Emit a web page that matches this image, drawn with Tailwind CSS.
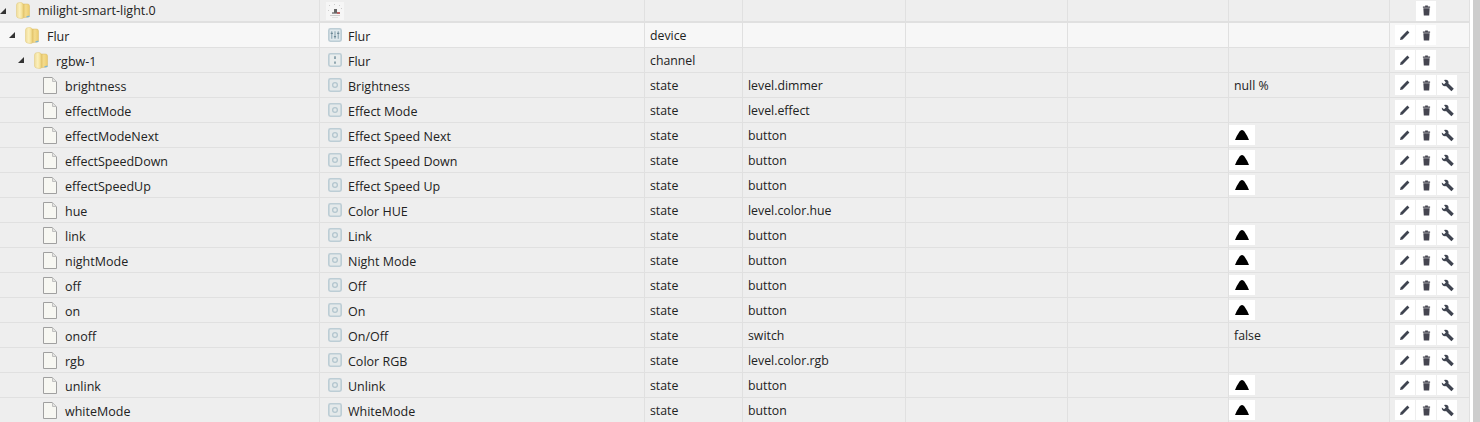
<!DOCTYPE html>
<html lang="en">
<head>
    <meta charset="UTF-8">
    <title>Objects | milight-smart-light.0</title>
    <script src="https://cdn.jsdelivr.net/npm/@tailwindcss/browser@4"></script>
</head>
<body class="bg-white overflow-hidden font-['Open_Sans',sans-serif] text-[12.5px] text-[#222]">

    <!-- Icons used by the rows -->
    <svg class="absolute w-0 h-0">
        <defs>
            <linearGradient id="folderLeft" x1="0" x2="1" y1="0" y2="0">
                <stop offset="0" stop-color="#f0dc9a"/>
                <stop offset="0.5" stop-color="#fbf0bd"/>
                <stop offset="1" stop-color="#f2d985"/>
            </linearGradient>
            <linearGradient id="folderRight" x1="0" x2="1" y1="0" y2="0">
                <stop offset="0" stop-color="#dcb85a"/>
                <stop offset="0.5" stop-color="#f4dc8e"/>
                <stop offset="1" stop-color="#eccb6c"/>
            </linearGradient>
            <symbol id="folder" viewBox="0 0 14 17">
                <path d="M6 2 L11.500 2 Q13.500 2 13.500 4 V13.500 Q13.500 15 12 15 L6 16 Z" fill="url(#folderRight)" stroke="#d9bb66" stroke-width=".5"/>
                <path d="M.5 3 Q.5 1 2.500 .7 L5 .5 Q7 .5 7 2.500 V15.500 Q7 16.700 5 16.500 L2.500 16 Q.5 15.500 .5 14 Z" fill="url(#folderLeft)" stroke="#e0c878" stroke-width=".5"/>
                <path d="M10.500 14.300 L13.500 13.500 V15 L10.500 15.500 Z" fill="#7db6d8"/>
            </symbol>
            <symbol id="file" viewBox="0 0 14 17">
                <path d="M.5.5 H9.500 L13.500 4.500 V16.500 H.5 Z" fill="#f7f7f2"/>
                <path d="M9.500 .5 H.5 V16.500 H13.500 V4.500" fill="none" stroke="#a0a0a0"/>
                <path d="M9.500 .5 V4.500 H13.500 Z" fill="#e4e4e0" stroke="#c0c0c0"/>
            </symbol>
            <symbol id="state" viewBox="0 0 13 13">
                <rect x=".75" y=".75" width="11.500" height="11.500" rx="1.500" fill="#e4e9ea" stroke="#bccdd5" stroke-width="1.500"/>
                <circle cx="6.500" cy="6.500" r="2.200" fill="none" stroke="#b3c6cf" stroke-width="1.200"/>
            </symbol>
            <symbol id="channel" viewBox="0 0 13 13">
                <rect x=".75" y=".75" width="11.500" height="11.500" rx="1.500" fill="#e9eded" stroke="#bccdd5" stroke-width="1.500"/>
                <path d="M6.500 3 v2.500 M6.500 8 v2" stroke="#7d97a3" stroke-width="1.500"/>
            </symbol>
            <symbol id="device" viewBox="0 0 13 13">
                <rect x=".75" y=".75" width="11.500" height="11.500" rx="1.500" fill="#dfe8ec" stroke="#bccdd5" stroke-width="1.500"/>
                <path d="M3.500 3 v7 M6.500 3 v7 M9.500 3 v7" stroke="#8aa4b0" stroke-width="1"/>
                <path d="M2.500 5h2 M5.500 8h2 M8.500 5h2" stroke="#6d8794" stroke-width="1"/>
            </symbol>
            <symbol id="pencil" viewBox="0 0 12 12">
                <path d="M1 11 L1.600 8.400 L8.400 1.600 L10.400 3.600 L3.600 10.400 Z" fill="#3f4450"/>
            </symbol>
            <symbol id="trash" viewBox="0 0 10 12">
                <path d="M3.500 .5 h3 v1 H9 v1.500 H1 V1.500 h2.500 Z M1.500 3.500 h7 L8 11.500 H2 Z" fill="#454550"/>
            </symbol>
            <symbol id="wrench" viewBox="0 0 13 13">
                <path d="M.8 3.500 L3 5.200 L4.800 3.500 L3 1 Q5.800 0 7.200 2 Q7.800 3.200 7.400 4.400 L12.800 9.800 L10.400 12.200 L5 7 Q3 7.600 1.600 6.200 Q.6 5 .8 3.500 Z" fill="#3f4450"/>
            </symbol>
            <symbol id="push" viewBox="0 0 14 10">
                <path d="M7 0 C8.200 0 9.200 1 10.200 2.800 Q12.500 6 14 10 H0 Q1.500 6 3.800 2.800 C4.800 1 5.800 0 7 0 Z" fill="#000"/>
            </symbol>
        </defs>
    </svg>

    <div class="flex">
        <!-- Object tree -->
        <div id="rows" class="w-[1470px] shrink-0 bg-[#eeeeee]"></div>
        <!-- Scrollbar -->
        <div class="w-[10px] h-[422px] bg-white pl-[3px]">
            <div class="h-full bg-[#cdcdcd]"></div>
        </div>
    </div>

    <script>
    const BTN = 'w-5 h-5 bg-white flex items-center justify-center';
    const CELL = 'border-r border-[#e0e0e0] flex items-center min-w-0';

    function use(id, cls) {
        return `<svg class="${cls}"><use href="#${id}"/></svg>`;
    }

    function buttons(actions) {
        const btn = (id, cls) => `<span class="${BTN}">${use(id, cls)}</span>`;
        return `<div class="flex gap-px pl-[5px]">
            ${actions.includes('e') ? btn('pencil', 'w-3 h-3') : '<span class="w-5 h-5"></span>'}
            ${btn('trash', 'w-[9px] h-[11px]')}
            ${actions.includes('w') ? btn('wrench', 'w-[13px] h-[13px]') : ''}
        </div>`;
    }

    function row(r) {
        const value = r.value === '^'
            ? `<span class="w-[26px] h-5 bg-white flex items-center pl-[6px]">${use('push', 'w-[14px] h-[10px]')}</span>`
            : `<span class="pl-[5px] pt-[2px] text-[12.300px]">${r.value || ''}</span>`;
        const leftPad = { 0: 'pl-0', 1: 'pl-[9px]', 2: 'pl-[18px]', 3: 'pl-[43px]' }[r.level];
        const treeIcon = r.level === 3
            ? use('file', 'w-[14px] h-[17px] mr-2')
            : `<span class="w-0 h-0 border-l-[6px] border-l-transparent border-b-[6px] border-b-[#333]"></span>` + use('folder', 'w-[14px] h-[17px] ml-[10px] mr-2');
        return `<div class="grid grid-cols-[320px_325px_98px_163px_162px_161px_161px_80px] ${r.cls}">
            <div class="${CELL} ${leftPad}">${treeIcon}<span class="${r.level === 0 ? 'pt-[2px]' : 'pt-[4px]'}">${r.id}</span></div>
            <div class="${CELL} ${r.level === 0 ? 'pl-[6px]' : 'pl-[8px]'} gap-[7px]">${r.icon}<span class="pt-[4px]">${r.name}</span></div>
            <div class="${CELL} pl-[5px]"><span class="pt-[2px] text-[12.300px]">${r.type || ''}</span></div>
            <div class="${CELL} pl-[5px]"><span class="pt-[2px] text-[12.300px]">${r.role || ''}</span></div>
            <div class="${CELL}"></div>
            <div class="${CELL}"></div>
            <div class="${CELL}">${value}</div>
            <div class="${CELL}">${buttons(r.actions)}</div>
        </div>`;
    }

    const stateIcon = use('state', 'w-[14px] h-[14px] shrink-0 -mr-px');
    const stateRow = (id, name, role, value) => ({
        level: 3, id, name, type: 'state', role, value, actions: 'ew',
        icon: stateIcon, cls: 'h-[25px] border-b border-[#e0e0e0]'
    });

    const rows = [
        { level: 0, id: 'milight-smart-light.0', name: '', actions: '',
          icon: `<svg class="w-[18px] h-[18px] shrink-0" viewBox="0 0 18 18"><rect width="18" height="18" fill="#f6f6f6"/><path d="M3 3h1v1H3zM8 2h1v1H8zM13 3h1v1h-1zM15 6h1v1h-1zM2 8h1v1H2z" fill="#ccc"/><path d="M6 10h7v2H6z" fill="#999"/><rect x="8" y="7" width="3" height="4" fill="#666"/><rect x="11" y="10" width="3" height="2" fill="#b66"/><path d="M4 13h10v1H4z" fill="#ccc"/><path d="M6 15h6v1H6z" fill="#e2e2e2"/></svg>`,
          cls: 'h-[23px] border-b-2 border-[#e0e0e0]' },
        { level: 1, id: 'Flur', name: 'Flur', type: 'device', actions: 'e',
          icon: use('device', 'w-[14px] h-[14px] shrink-0 -mr-px'), cls: 'h-[25px] bg-[#f7f7f7] border-b border-[#e0e0e0]' },
        { level: 2, id: 'rgbw-1', name: 'Flur', type: 'channel', actions: 'e',
          icon: use('channel', 'w-[14px] h-[14px] shrink-0 -mr-px'), cls: 'h-[25px] border-b border-[#e0e0e0]' },
        stateRow('brightness', 'Brightness', 'level.dimmer', 'null %'),
        stateRow('effectMode', 'Effect Mode', 'level.effect'),
        stateRow('effectModeNext', 'Effect Speed Next', 'button', '^'),
        stateRow('effectSpeedDown', 'Effect Speed Down', 'button', '^'),
        stateRow('effectSpeedUp', 'Effect Speed Up', 'button', '^'),
        stateRow('hue', 'Color HUE', 'level.color.hue'),
        stateRow('link', 'Link', 'button', '^'),
        stateRow('nightMode', 'Night Mode', 'button', '^'),
        stateRow('off', 'Off', 'button', '^'),
        stateRow('on', 'On', 'button', '^'),
        stateRow('onoff', 'On/Off', 'switch', 'false'),
        stateRow('rgb', 'Color RGB', 'level.color.rgb'),
        stateRow('unlink', 'Unlink', 'button', '^'),
        stateRow('whiteMode', 'WhiteMode', 'button', '^'),
    ];

    document.getElementById('rows').innerHTML = rows.map(row).join('');
    </script>

</body>
</html>
